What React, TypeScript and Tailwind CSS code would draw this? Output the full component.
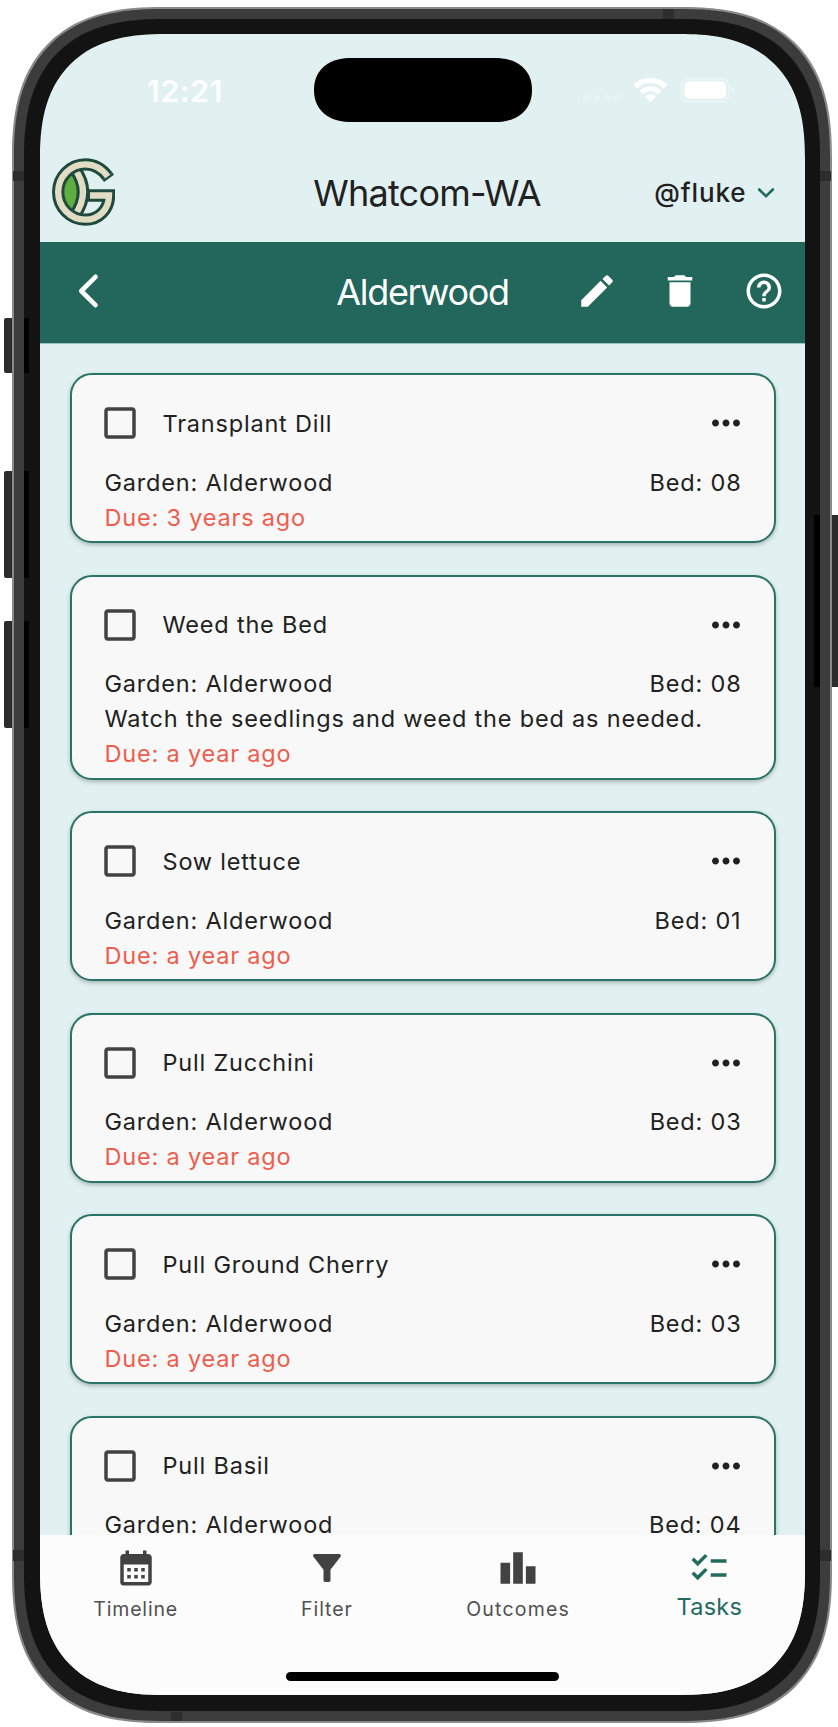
import React from 'react';
import {
  MdCalendarMonth,
  MdCheckBoxOutlineBlank,
  MdChecklist,
  MdDelete,
  MdEdit,
  MdFilterAlt,
  MdHelpOutline,
  MdLeaderboard,
  MdMoreHoriz,
} from 'react-icons/md';

type Task = { title: string; garden: string; bed: string; note?: string; due: string };

const tasks: Task[] = [
  { title: 'Transplant Dill', garden: 'Alderwood', bed: '08', due: '3 years ago' },
  {
    title: 'Weed the Bed',
    garden: 'Alderwood',
    bed: '08',
    note: 'Watch the seedlings and weed the bed as needed.',
    due: 'a year ago',
  },
  { title: 'Sow lettuce', garden: 'Alderwood', bed: '01', due: 'a year ago' },
  { title: 'Pull Zucchini', garden: 'Alderwood', bed: '03', due: 'a year ago' },
  { title: 'Pull Ground Cherry', garden: 'Alderwood', bed: '03', due: 'a year ago' },
  { title: 'Pull Basil', garden: 'Alderwood', bed: '04', due: 'a year ago' },
];

function Logo() {
  const ring =
    'M203 109C187 87 163 72.500 136 72.500A82 83 0 0 0 54.500 155.500A82 83 0 0 0 136 238.500C177 238.500 207 207 207 166H146';
  return (
    <svg viewBox="36 54 189 203" className="h-[68px] w-[63px]" fill="none">
      <path d="M92 96Q140 155 92 214Q44 155 92 96Z" fill="#5fae40" />
      <path d="M104 86Q154 155 104 226" stroke="#1f4a3e" strokeWidth="37" />
      <path d="M104 86Q154 155 104 226" stroke="#e3dcc4" strokeWidth="19" />
      <path d="M207 114.500L203 109" stroke="#1f4a3e" strokeWidth="37" />
      <path d={ring} stroke="#1f4a3e" strokeWidth="37" />
      <path d={ring} stroke="#e3dcc4" strokeWidth="19" />
      <path d="M146 148V184" stroke="#1f4a3e" strokeWidth="8" />
    </svg>
  );
}

function StatusBar() {
  return (
    <div className="flex h-[112px] items-start text-white">
      <div className="w-[274px] pt-[38px] pl-[107px] text-[30px] leading-[38px] font-semibold tracking-[0.8px]">
        12:21
      </div>
      <div className="mt-6 h-16 w-[218px] rounded-[37px/32px] bg-black [corner-shape:superellipse(1.150)]" />
      <svg viewBox="580 70 160 40" className="mt-9 ml-[48px] h-10 w-40" fill="none">
        <g fill="#fff" opacity="0.25">
          <circle cx="586.300" cy="98.300" r="3.400" />
          <circle cx="596.800" cy="98.300" r="3.400" />
          <circle cx="607.200" cy="98.300" r="3.400" />
          <circle cx="617.500" cy="98.300" r="3.400" />
        </g>
        <path
          fill="#fff"
          d="M650.500 77.700c6 0 11.800 2.300 16.200 6.400.4.400.4 1 0 1.400l-2.300 2.400c-.4.400-1 .4-1.400 0a18.100 18.100 0 0 0-25 0c-.4.400-1 .4-1.400 0l-2.300-2.400c-.4-.4-.4-1 0-1.400a23.700 23.700 0 0 1 16.200-6.400z"
        />
        <path
          fill="#fff"
          d="M650.500 86.200c4 0 7.700 1.500 10.500 4.100.4.400.4 1 0 1.400l-2.300 2.300c-.4.400-1 .4-1.400 0a10.100 10.100 0 0 0-13.600 0c-.4.400-1 .4-1.400 0l-2.300-2.300c-.4-.4-.4-1 0-1.400a15.400 15.400 0 0 1 10.500-4.100z"
        />
        <path
          fill="#fff"
          d="M650.500 94.200c1.800 0 3.500.6 4.800 1.700.4.400.4 1 0 1.400l-4.100 4.200c-.4.400-1 .4-1.400 0l-4.100-4.200c-.4-.4-.4-1 0-1.400 1.300-1.100 3-1.700 4.800-1.700z"
        />
        <rect x="681.600" y="78.500" width="47" height="23" rx="7" stroke="#fff" strokeWidth="1.900" opacity="0.35" />
        <path d="M731.500 86.300c3.400 1 3.400 6.600 0 7.600z" fill="#fff" opacity="0.400" />
        <rect x="684.400" y="81.400" width="41.400" height="17.300" rx="4.600" fill="#fff" />
      </svg>
    </div>
  );
}

function Header() {
  return (
    <header className="grid h-24 grid-cols-[220px_1fr_220px] items-start">
      <div className="pt-[12px] pl-[12px]">
        <Logo />
      </div>
      <h1 className="pt-[24px] pl-[9px] text-center text-[36px] leading-[47px] font-normal tracking-[-0.75px]">
        Whatcom-WA
      </h1>
      <button className="flex items-center justify-end pt-[30px] pr-[29.500px] text-[26px] leading-[34px] font-medium tracking-[0.9px]">
        @fluke
        <svg viewBox="0 0 20 14" className="ml-[9px] h-[14px] w-5" fill="none" stroke="#236b5f" strokeWidth="2.600">
          <path d="M3.200 3.500L10 10.200L16.800 3.500" strokeLinecap="round" />
        </svg>
      </button>
    </header>
  );
}

function TitleBar() {
  return (
    <div className="grid h-[102px] grid-cols-[270px_1fr_270px] items-center border-b border-[#9cc3bd] bg-[#23675c] text-white">
      <svg viewBox="0 0 24 36" className="ml-[37px] -mt-[3px] h-9 w-6" fill="none" stroke="#fff" strokeWidth="4.600">
        <path d="M18.500 3.800L4.300 18L18.500 32.200" strokeLinecap="round" strokeLinejoin="round" />
      </svg>
      <h2 className="text-center text-[36px] leading-[47px] font-normal tracking-[-1.35px]">Alderwood</h2>
      <div className="-mt-[3px] flex justify-end gap-[41.500px] pr-[20.500px]">
        <MdEdit className="size-[42px]" />
        <MdDelete className="size-[42px]" />
        <MdHelpOutline className="size-[42px]" />
      </div>
    </div>
  );
}

function TaskCard({ task }: { task: Task }) {
  return (
    <article className="shrink-0 rounded-[22px] border-2 border-[#2a7367] bg-[#f8f8f8] pt-[27px] pr-[32px] pb-[6.500px] pl-[32.500px] leading-[35px] tracking-[0.810px] shadow-[0_2px_4px_rgba(0,0,0,0.25)]">
      <div className="flex h-[42px] items-center">
        <MdCheckBoxOutlineBlank className="-ml-[5.500px] size-[42px] text-[#424242]" />
        <h3 className="ml-[21.500px] flex-1">{task.title}</h3>
        <MdMoreHoriz className="-mr-[5px] size-[42px]" />
      </div>
      <div className="mt-[20.500px] flex justify-between">
        <span>Garden: {task.garden}</span>
        <span>Bed: {task.bed}</span>
      </div>
      {task.note && <p className="whitespace-nowrap">{task.note}</p>}
      <p className="text-[#ee5d4d]">Due: {task.due}</p>
    </article>
  );
}

function TabBar() {
  return (
    <nav className="flex h-40 shrink-0 flex-col bg-[#fcfcfc]">
      <div className="grid flex-1 grid-cols-4 justify-items-center pt-3 text-[19.500px] leading-[35px] text-[#505050]">
        <div className="flex flex-col items-center gap-[3px] tracking-[0.820px]">
          <MdCalendarMonth className="size-[42px] text-[#424242]" />
          Timeline
        </div>
        <div className="flex flex-col items-center gap-[3px] tracking-[0.900px]">
          <MdFilterAlt className="size-[42px] text-[#424242]" />
          Filter
        </div>
        <div className="flex flex-col items-center gap-[3px] tracking-[1.200px]">
          <MdLeaderboard className="size-[42px] text-[#424242]" />
          Outcomes
        </div>
        <div className="flex flex-col items-center text-[23.500px] tracking-[0.260px] text-[#236b5f]">
          <MdChecklist className="size-[42px]" />
          Tasks
        </div>
      </div>
      <div className="mx-auto mb-[14px] h-[9px] w-[273px] rounded-full bg-black" />
    </nav>
  );
}

function Hardware() {
  return (
    <>
      <div className="absolute top-[318px] left-[4px] h-[55px] w-[9px] rounded-l-[2px] bg-[#2c2c2c]" />
      <div className="absolute top-[471px] left-[4px] h-[107px] w-[9px] rounded-l-[2px] bg-[#2c2c2c]" />
      <div className="absolute top-[621px] left-[4px] h-[107px] w-[9px] rounded-l-[2px] bg-[#2c2c2c]" />
      <div className="absolute top-[515px] left-[831px] h-[172px] w-[7px] bg-[#2c2c2c]" />
    </>
  );
}

function HardwareInsets() {
  return (
    <>
      <div className="absolute top-[318px] left-[24px] h-[55px] w-[5px] bg-black" />
      <div className="absolute top-[471px] left-[24px] h-[107px] w-[5px] bg-black" />
      <div className="absolute top-[621px] left-[24px] h-[107px] w-[5px] bg-black" />
      <div className="absolute top-[515px] left-[814px] h-[172px] w-[6px] bg-black" />
      <div className="absolute top-[171px] left-[13px] h-[10px] w-[11px] bg-[#2d2d2d]" />
      <div className="absolute top-[171px] left-[820px] h-[10px] w-[11px] bg-[#2d2d2d]" />
      <div className="absolute top-[1550px] left-[13px] h-[11px] w-[11px] bg-[#2d2d2d]" />
      <div className="absolute top-[1550px] left-[820px] h-[11px] w-[11px] bg-[#2d2d2d]" />
      <div className="absolute top-[9px] left-[663px] h-[10px] w-[11px] bg-[#2d2d2d]" />
      <div className="absolute top-[1712px] left-[171px] h-[9px] w-[11px] bg-[#2d2d2d]" />
    </>
  );
}

export default function App() {
  return (
    <div className="relative h-[1727px] w-[838px] overflow-hidden bg-white pt-[7px] pl-[12px] text-[23.500px] text-[#212121] [font-family:Inter,'Liberation_Sans',sans-serif]">
      <Hardware />
      <div className="relative h-[1716px] w-[820px] rounded-[150px] border-2 border-[#8a8a8a] bg-[#3c3c3c] p-[10px] [corner-shape:superellipse(1.320)]">
        <div className="h-[1692px] w-[796px] rounded-[139px] bg-[#131313] pt-[15px] pl-[16px] [corner-shape:superellipse(1.320)]">
          <div className="flex h-[1661px] w-[765px] flex-col overflow-hidden rounded-[125px] bg-[#e1f1f1] [corner-shape:superellipse(1.320)]">
            <StatusBar />
            <Header />
            <TitleBar />
            <main className="flex min-h-0 flex-1 flex-col gap-[31.500px] overflow-hidden pt-[29px] pr-[29.500px] pl-[30px]">
              {tasks.map((task) => (
                <TaskCard key={task.title} task={task} />
              ))}
            </main>
            <TabBar />
          </div>
        </div>
      </div>
      <HardwareInsets />
    </div>
  );
}
